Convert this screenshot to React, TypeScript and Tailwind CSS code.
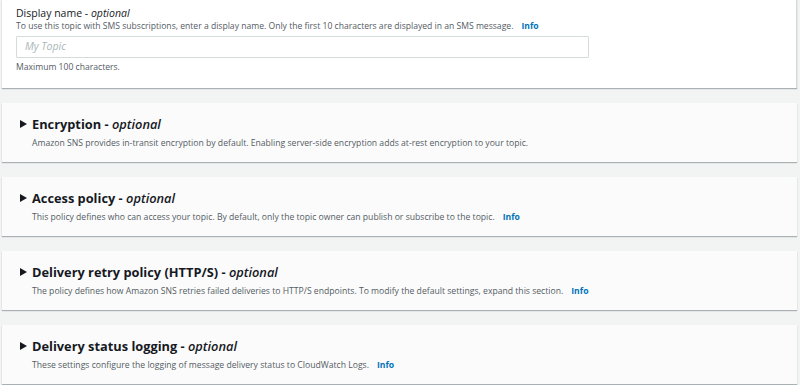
import { Fragment } from 'react';

type Section = { title: string; desc: string; info?: boolean };

const sections: Section[] = [
  {
    title: 'Encryption',
    desc: 'Amazon SNS provides in-transit encryption by default. Enabling server-side encryption adds at-rest encryption to your topic.',
  },
  {
    title: 'Access policy',
    desc: 'This policy defines who can access your topic. By default, only the topic owner can publish or subscribe to the topic.',
    info: true,
  },
  {
    title: 'Delivery retry policy (HTTP/S)',
    desc: 'The policy defines how Amazon SNS retries failed deliveries to HTTP/S endpoints. To modify the default settings, expand this section.',
    info: true,
  },
  {
    title: 'Delivery status logging',
    desc: 'These settings configure the logging of message delivery status to CloudWatch Logs.',
    info: true,
  },
];

const font = { fontFamily: '"Open Sans", "Noto Sans", sans-serif' };

function Info() {
  return <span className="ml-[8px] font-bold text-[#0073bb]">Info</span>;
}

export default function App() {
  return (
    <div className="w-[800px] h-[385px] overflow-hidden bg-[#f2f3f3] text-[#16191f]" style={font}>
      <div className="ml-[2px] mr-[3px] h-[88px] bg-white border-r border-[#d5dbdb] shadow-[0_1px_1px_rgba(0,28,36,0.3)] px-[14px] pt-[6px]">
        <div className="text-[10.5px] leading-[14px]">
          Display name - <i>optional</i>
        </div>
        <div className="text-[8.6px] leading-[12px] text-[#545b64]">
          To use this topic with SMS subscriptions, enter a display name. Only the first 10 characters are displayed in an SMS message.
          <Info />
        </div>
        <div className="mt-[4px] w-[573px] h-[22px] border border-[#d5dbdb] rounded-[1px] bg-white flex items-center px-[8px] text-[10.5px] italic text-[#aab7b8]">
          My Topic
        </div>
        <div className="mt-[3px] text-[8.6px] leading-[12px] text-[#545b64]">Maximum 100 characters.</div>
      </div>

      <div className="flex flex-col gap-[15px] mt-[15px]">
        {sections.map(s => (
          <Fragment key={s.title}>
            <div className="ml-[2px] mr-[3px] h-[59px] bg-[#fbfbfb] shadow-[0_1px_1px_rgba(0,28,36,0.3)] pl-[18px] pt-[12px]">
              <div className="flex items-center h-[18px]">
                <svg width="7" height="8" viewBox="0 0 7 8" className="mr-[5px]">
                  <path d="M0 0 L7 4 L0 8 Z" fill="#16191f" />
                </svg>
                <span className="text-[12.8px] font-bold leading-[18px]">
                  {s.title} - <i className="font-semibold">optional</i>
                </span>
              </div>
              <div className="pl-[12px] mt-[4px] text-[8.65px] leading-[12px] text-[#545b64]">
                {s.desc}
                {s.info && <Info />}
              </div>
            </div>
          </Fragment>
        ))}
      </div>
    </div>
  );
}
